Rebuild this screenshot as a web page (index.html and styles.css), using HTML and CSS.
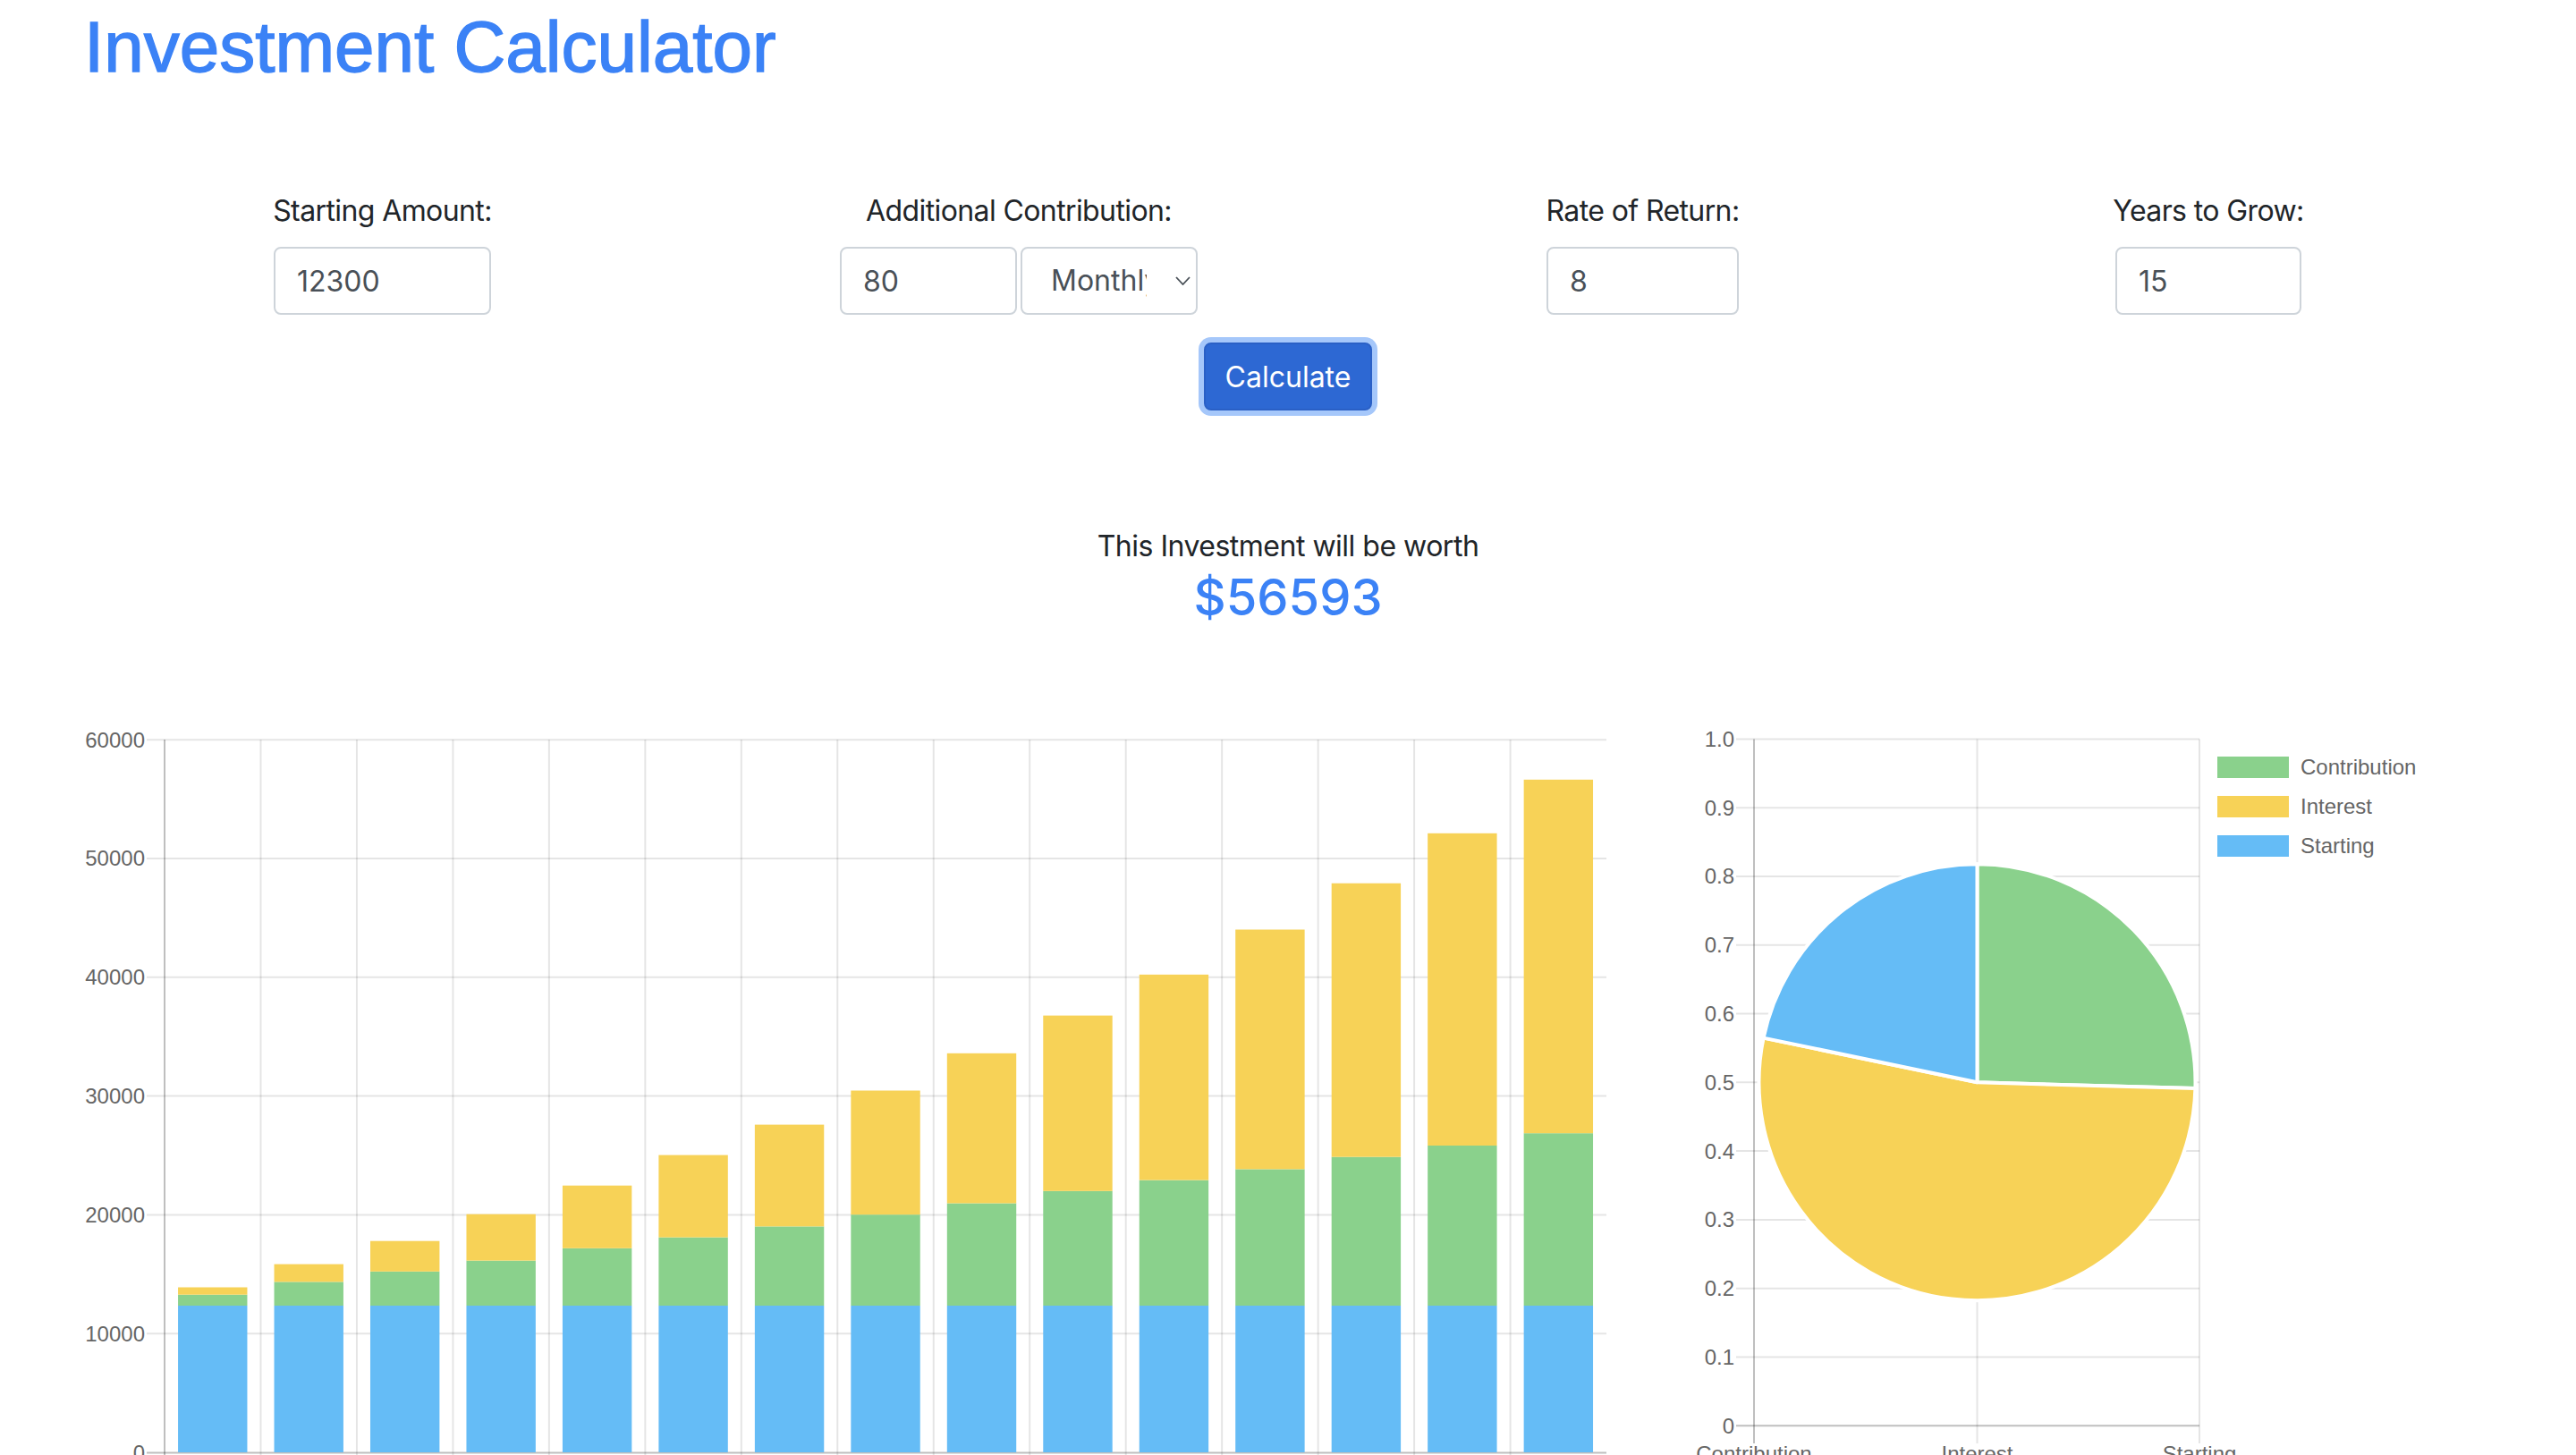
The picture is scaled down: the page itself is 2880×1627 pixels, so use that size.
FILE: index.html
```html
<!DOCTYPE html>
<html lang="en">
<head>
<meta charset="utf-8">
<title>Investment Calculator</title>
<link rel="stylesheet" href="styles.css">
</head>
<body>
<h1 class="title">Investment Calculator</h1>

<form class="calc-form">
  <div class="fields">
    <div class="field f-start">
      <label class="field-label">Starting Amount:</label>
      <input class="input" type="text" value="12300">
    </div>
    <div class="field f-contrib">
      <label class="field-label">Additional Contribution:</label>
      <div class="input-pair">
        <input class="input" type="text" value="80">
        <div class="input select">
          <span class="select-text">Monthly</span>
          <svg class="chevron" viewBox="0 0 17 10"><polyline points="1,1 8.5,9 16,1" fill="none" stroke="#495057" stroke-width="1.8"/></svg>
        </div>
      </div>
    </div>
    <div class="field f-rate">
      <label class="field-label">Rate of Return:</label>
      <input class="input" type="text" value="8">
    </div>
    <div class="field f-years">
      <label class="field-label">Years to Grow:</label>
      <input class="input" type="text" value="15">
    </div>
  </div>
  <div class="actions">
    <button class="btn" type="button">Calculate</button>
  </div>
</form>

<section class="result">
  <p class="result-label">This Investment will be worth</p>
  <h3 class="result-value">$56593</h3>
</section>

<section class="charts">
  <svg class="bar-chart" width="1820" height="900" viewBox="0 800 1820 900">
    <g class="grid" stroke="rgba(0,0,0,0.1)" stroke-width="2">
      <line x1="164" y1="1491.2" x2="1796" y2="1491.2"/>
      <line x1="164" y1="1358.4" x2="1796" y2="1358.4"/>
      <line x1="164" y1="1225.6" x2="1796" y2="1225.6"/>
      <line x1="164" y1="1092.8" x2="1796" y2="1092.8"/>
      <line x1="164" y1="960" x2="1796" y2="960"/>
      <line x1="164" y1="827.2" x2="1796" y2="827.2"/>
      <line x1="291.47" y1="827" x2="291.47" y2="1644"/>
      <line x1="398.94" y1="827" x2="398.94" y2="1644"/>
      <line x1="506.41" y1="827" x2="506.41" y2="1644"/>
      <line x1="613.88" y1="827" x2="613.88" y2="1644"/>
      <line x1="721.35" y1="827" x2="721.35" y2="1644"/>
      <line x1="828.82" y1="827" x2="828.82" y2="1644"/>
      <line x1="936.29" y1="827" x2="936.29" y2="1644"/>
      <line x1="1043.76" y1="827" x2="1043.76" y2="1644"/>
      <line x1="1151.23" y1="827" x2="1151.23" y2="1644"/>
      <line x1="1258.7" y1="827" x2="1258.7" y2="1644"/>
      <line x1="1366.17" y1="827" x2="1366.17" y2="1644"/>
      <line x1="1473.64" y1="827" x2="1473.64" y2="1644"/>
      <line x1="1581.11" y1="827" x2="1581.11" y2="1644"/>
      <line x1="1688.58" y1="827" x2="1688.58" y2="1644"/>
    </g>
    <g stroke="rgba(0,0,0,0.25)" stroke-width="2">
      <line x1="164" y1="1624.4" x2="1796" y2="1624.4"/>
      <line x1="184" y1="827" x2="184" y2="1644"/>
    </g>
    <g class="axis-text" text-anchor="end">
      <text x="162" y="1624.4" dy="0.35em">0</text>
      <text x="162" y="1491.2" dy="0.35em">10000</text>
      <text x="162" y="1358.4" dy="0.35em">20000</text>
      <text x="162" y="1225.6" dy="0.35em">30000</text>
      <text x="162" y="1092.8" dy="0.35em">40000</text>
      <text x="162" y="960" dy="0.35em">50000</text>
      <text x="162" y="827.2" dy="0.35em">60000</text>
    </g>
    <g class="axis-text" text-anchor="middle">
      <text x="237.7" y="1670">1</text>
      <text x="345.2" y="1670">2</text>
      <text x="452.7" y="1670">3</text>
      <text x="560.2" y="1670">4</text>
      <text x="667.6" y="1670">5</text>
      <text x="775.1" y="1670">6</text>
      <text x="882.6" y="1670">7</text>
      <text x="990" y="1670">8</text>
      <text x="1097.5" y="1670">9</text>
      <text x="1205" y="1670">10</text>
      <text x="1312.4" y="1670">11</text>
      <text x="1419.9" y="1670">12</text>
      <text x="1527.4" y="1670">13</text>
      <text x="1634.8" y="1670">14</text>
      <text x="1742.3" y="1670">15</text>
    </g>
    <g class="bars">
      <rect class="b-start" x="199.05" y="1460" width="77.4" height="164"/>
      <rect class="b-contrib" x="199.05" y="1447.7" width="77.4" height="12.3"/>
      <rect class="b-interest" x="199.05" y="1439.5" width="77.4" height="8.2"/>

      <rect class="b-start" x="306.52" y="1460" width="77.4" height="164"/>
      <rect class="b-contrib" x="306.52" y="1433.4" width="77.4" height="26.6"/>
      <rect class="b-interest" x="306.52" y="1413.6" width="77.4" height="19.8"/>

      <rect class="b-start" x="413.99" y="1460" width="77.4" height="164"/>
      <rect class="b-contrib" x="413.99" y="1421.8" width="77.4" height="38.2"/>
      <rect class="b-interest" x="413.99" y="1387.7" width="77.4" height="34.1"/>

      <rect class="b-start" x="521.46" y="1460" width="77.4" height="164"/>
      <rect class="b-contrib" x="521.46" y="1409.6" width="77.4" height="50.4"/>
      <rect class="b-interest" x="521.46" y="1357.7" width="77.4" height="51.9"/>

      <rect class="b-start" x="628.93" y="1460" width="77.4" height="164"/>
      <rect class="b-contrib" x="628.93" y="1395.8" width="77.4" height="64.2"/>
      <rect class="b-interest" x="628.93" y="1325.7" width="77.4" height="70.1"/>

      <rect class="b-start" x="736.4" y="1460" width="77.4" height="164"/>
      <rect class="b-contrib" x="736.4" y="1383.6" width="77.4" height="76.4"/>
      <rect class="b-interest" x="736.4" y="1291.6" width="77.4" height="92"/>

      <rect class="b-start" x="843.87" y="1460" width="77.4" height="164"/>
      <rect class="b-contrib" x="843.87" y="1371.4" width="77.4" height="88.6"/>
      <rect class="b-interest" x="843.87" y="1257.6" width="77.4" height="113.8"/>

      <rect class="b-start" x="951.34" y="1460" width="77.4" height="164"/>
      <rect class="b-contrib" x="951.34" y="1358.2" width="77.4" height="101.8"/>
      <rect class="b-interest" x="951.34" y="1219.5" width="77.4" height="138.7"/>

      <rect class="b-start" x="1058.81" y="1460" width="77.4" height="164"/>
      <rect class="b-contrib" x="1058.81" y="1345.5" width="77.4" height="114.5"/>
      <rect class="b-interest" x="1058.81" y="1177.8" width="77.4" height="167.7"/>

      <rect class="b-start" x="1166.28" y="1460" width="77.4" height="164"/>
      <rect class="b-contrib" x="1166.28" y="1331.8" width="77.4" height="128.2"/>
      <rect class="b-interest" x="1166.28" y="1135.6" width="77.4" height="196.2"/>

      <rect class="b-start" x="1273.75" y="1460" width="77.4" height="164"/>
      <rect class="b-contrib" x="1273.75" y="1319.6" width="77.4" height="140.4"/>
      <rect class="b-interest" x="1273.75" y="1089.8" width="77.4" height="229.8"/>

      <rect class="b-start" x="1381.22" y="1460" width="77.4" height="164"/>
      <rect class="b-contrib" x="1381.22" y="1307.4" width="77.4" height="152.6"/>
      <rect class="b-interest" x="1381.22" y="1039.5" width="77.4" height="267.9"/>

      <rect class="b-start" x="1488.69" y="1460" width="77.4" height="164"/>
      <rect class="b-contrib" x="1488.69" y="1293.7" width="77.4" height="166.3"/>
      <rect class="b-interest" x="1488.69" y="987.7" width="77.4" height="306"/>

      <rect class="b-start" x="1596.16" y="1460" width="77.4" height="164"/>
      <rect class="b-contrib" x="1596.16" y="1281" width="77.4" height="179"/>
      <rect class="b-interest" x="1596.16" y="931.8" width="77.4" height="349.2"/>

      <rect class="b-start" x="1703.63" y="1460" width="77.4" height="164"/>
      <rect class="b-contrib" x="1703.63" y="1267.2" width="77.4" height="192.8"/>
      <rect class="b-interest" x="1703.63" y="871.8" width="77.4" height="395.4"/>
    </g>
  </svg>

  <svg class="pie-chart" width="1060" height="900" viewBox="1820 800 1060 900">
    <g stroke="rgba(0,0,0,0.1)" stroke-width="2">
      <line x1="1941" y1="1517.5" x2="2459" y2="1517.5"/>
      <line x1="1941" y1="1440.7" x2="2459" y2="1440.7"/>
      <line x1="1941" y1="1363.9" x2="2459" y2="1363.9"/>
      <line x1="1941" y1="1287.1" x2="2459" y2="1287.1"/>
      <line x1="1941" y1="1210.3" x2="2459" y2="1210.3"/>
      <line x1="1941" y1="1133.6" x2="2459" y2="1133.6"/>
      <line x1="1941" y1="1056.8" x2="2459" y2="1056.8"/>
      <line x1="1941" y1="980" x2="2459" y2="980"/>
      <line x1="1941" y1="903.2" x2="2459" y2="903.2"/>
      <line x1="1941" y1="826.4" x2="2459" y2="826.4"/>
      <line x1="2210.5" y1="826.4" x2="2210.5" y2="1614"/>
      <line x1="2459" y1="826.4" x2="2459" y2="1614"/>
    </g>
    <g stroke="rgba(0,0,0,0.25)" stroke-width="2">
      <line x1="1941" y1="1594.3" x2="2459" y2="1594.3"/>
      <line x1="1961" y1="826.4" x2="1961" y2="1614"/>
    </g>
    <g class="axis-text" text-anchor="end">
      <text x="1939" y="1594.3" dy="0.35em">0</text>
      <text x="1939" y="1517.5" dy="0.35em">0.1</text>
      <text x="1939" y="1440.7" dy="0.35em">0.2</text>
      <text x="1939" y="1363.9" dy="0.35em">0.3</text>
      <text x="1939" y="1287.1" dy="0.35em">0.4</text>
      <text x="1939" y="1210.3" dy="0.35em">0.5</text>
      <text x="1939" y="1133.6" dy="0.35em">0.6</text>
      <text x="1939" y="1056.8" dy="0.35em">0.7</text>
      <text x="1939" y="980" dy="0.35em">0.8</text>
      <text x="1939" y="903.2" dy="0.35em">0.9</text>
      <text x="1939" y="826.4" dy="0.35em">1.0</text>
    </g>
    <g class="axis-text" text-anchor="middle">
      <text x="1961" y="1634">Contribution</text>
      <text x="2210.5" y="1634">Interest</text>
      <text x="2459" y="1634">Starting</text>
    </g>
    <g class="pie" stroke="#fff" stroke-width="4" stroke-linejoin="round">
      <path class="b-contrib" d="M2210.5 1210.3 L2210.5 966.3 A244 244 0 0 1 2454.4 1217.1 Z"/>
      <path class="b-interest" d="M2210.5 1210.3 L2454.4 1217.1 A244 244 0 1 1 1971.6 1160.6 Z"/>
      <path class="b-start" d="M2210.5 1210.3 L1971.6 1160.6 A244 244 0 0 1 2210.5 966.3 Z"/>
    </g>
    <g class="legend">
      <rect class="b-contrib" x="2479" y="846" width="80" height="24"/>
      <text class="legend-text" x="2572" y="858" dy="0.35em">Contribution</text>
      <rect class="b-interest" x="2479" y="890" width="80" height="24"/>
      <text class="legend-text" x="2572" y="902" dy="0.35em">Interest</text>
      <rect class="b-start" x="2479" y="934" width="80" height="24"/>
      <text class="legend-text" x="2572" y="946" dy="0.35em">Starting</text>
    </g>
  </svg>
</section>
</body>
</html>
```

FILE: styles.css
```css
* {
  box-sizing: border-box;
}

body {
  margin: 0;
  background: #fff;
  color: #212529;
  font-family: Inter, "Liberation Sans", sans-serif;
  font-size: 32px;
  line-height: 1.5;
}

.title {
  margin: 0 0 16px;
  padding: 5px 0 0 94px;
  font-family: "Liberation Sans", Arial, sans-serif;
  font-size: 80px;
  font-weight: 400;
  line-height: 1.2;
  color: #3b82f6;
  -webkit-text-stroke: 1.4px #3b82f6;
}

.calc-form {
  padding-top: 95px;
}

.fields {
  display: flex;
  column-gap: 390px;
  padding-left: 306px;
}

.field {
  display: flex;
  flex-direction: column;
  align-items: center;
  flex: none;
}

.f-start { width: 243px; }
.f-contrib { width: 400px; }
.f-rate { width: 215px; }
.f-years { width: 208px; margin-left: 31px; }

.field-label {
  display: block;
  margin-bottom: 16px;
  white-space: nowrap;
  letter-spacing: -0.6px;
}

.input {
  width: 100%;
  height: 76px;
  padding: 0 24px;
  border: 2px solid #ced4da;
  border-radius: 8px;
  background: #fff;
  color: #495057;
  font-family: inherit;
  font-size: 32px;
  line-height: 1.5;
  outline: none;
}

.input-pair {
  display: flex;
  gap: 4px;
  width: 100%;
}

.input-pair .input {
  width: 198px;
  flex: none;
}

.select {
  display: flex;
  align-items: center;
  padding: 0 6px 0 32px;
}

.select-text {
  width: 107px;
  overflow: hidden;
  white-space: nowrap;
}

.chevron {
  display: block;
  width: 17px;
  height: 10px;
  margin-left: auto;
}

.actions {
  display: flex;
  justify-content: center;
  margin-top: 31px;
}

.btn {
  width: 188px;
  height: 76px;
  padding: 0;
  border: 2px solid #2a60c6;
  border-radius: 8px;
  background: #2d68d3;
  color: #fff;
  font-family: inherit;
  font-size: 32px;
  box-shadow: 0 0 0 6px #a5c7fa;
}

.result {
  margin-top: 128px;
  text-align: center;
}

.result-label {
  margin: 0;
  letter-spacing: -0.5px;
}

.result-value {
  margin: 0;
  font-size: 56px;
  font-weight: 500;
  line-height: 1.2;
  color: #3b82f6;
}

.charts {
  display: flex;
  margin-top: 98px;
}

.bar-chart,
.pie-chart {
  display: block;
  flex: none;
}

.axis-text text,
.legend-text {
  font-family: "Liberation Sans", Arial, sans-serif;
  font-size: 24px;
  fill: #666;
}

.b-start { fill: #65bcf6; }
.b-contrib { fill: #8ad18c; }
.b-interest { fill: #f7d257; }
```
